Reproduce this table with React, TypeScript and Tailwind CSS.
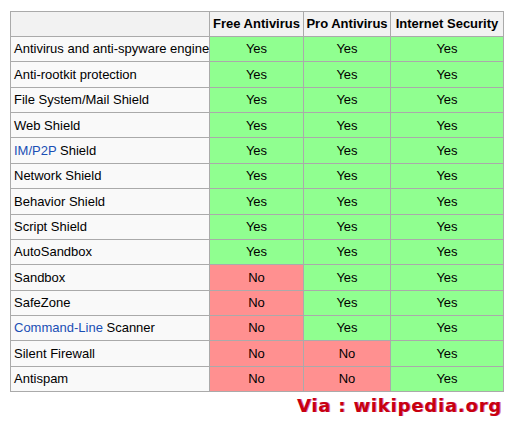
import React from 'react'

const rows: [React.ReactNode, boolean, boolean, boolean][] = [
  ['Antivirus and anti-spyware engine', true, true, true],
  ['Anti-rootkit protection', true, true, true],
  ['File System/Mail Shield', true, true, true],
  ['Web Shield', true, true, true],
  [<><span className="text-[#1a4fb5]">IM/P2P</span> Shield</>, true, true, true],
  ['Network Shield', true, true, true],
  ['Behavior Shield', true, true, true],
  ['Script Shield', true, true, true],
  ['AutoSandbox', true, true, true],
  ['Sandbox', false, true, true],
  ['SafeZone', false, true, true],
  [<><span className="text-[#1a4fb5]">Command-Line</span> Scanner</>, false, true, true],
  ['Silent Firewall', false, false, true],
  ['Antispam', false, false, true],
]

function Cell({ yes }: { yes: boolean }) {
  return (
    <td className={`border border-[#aaaaaa] text-center ${yes ? 'bg-[#90ff90]' : 'bg-[#ff9090]'}`}>
      {yes ? 'Yes' : 'No'}
    </td>
  )
}

export default function App() {
  return (
    <div className="w-[515px] h-[428px] bg-white font-['Liberation_Sans',Arial,sans-serif] text-[13px] text-black">
      <div className="pt-[11px] pl-[10px]">
        <table className="border-collapse table-fixed w-[493px]">
          <colgroup>
            <col className="w-[199px]" />
            <col className="w-[94px]" />
            <col className="w-[87px]" />
            <col className="w-[113px]" />
          </colgroup>
          <thead>
            <tr className="h-[25px] bg-[#f2f2f2]">
              <th className="border border-[#aaaaaa]"></th>
              <th className="border border-[#aaaaaa] font-bold text-center">Free Antivirus</th>
              <th className="border border-[#aaaaaa] font-bold text-center">Pro Antivirus</th>
              <th className="border border-[#aaaaaa] font-bold text-center">Internet Security</th>
            </tr>
          </thead>
          <tbody>
            {rows.map(([name, a, b, c], i) => (
              <tr key={i} className="h-[25.36px]">
                <td className="border border-[#aaaaaa] bg-[#f9f9f9] pl-[3px] whitespace-nowrap">{name}</td>
                <Cell yes={a} />
                <Cell yes={b} />
                <Cell yes={c} />
              </tr>
            ))}
          </tbody>
        </table>
      </div>
      <div className="flex justify-end pr-[13px] pt-[2px]">
        <span className="font-['DejaVu_Sans',sans-serif] text-[18px] font-bold tracking-[0.8px] text-[#c8000f] leading-6 [text-shadow:1px_0_0_#d070b0]">
          Via : wikipedia.org
        </span>
      </div>
    </div>
  )
}
